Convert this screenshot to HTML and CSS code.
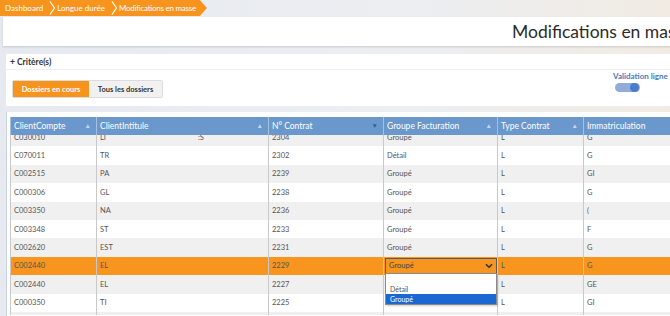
FILE: index.html
```html
<!DOCTYPE html>
<html lang="fr">
<head>
  <meta charset="UTF-8">
  <meta name="viewport" content="width=device-width, initial-scale=1.0">
  <title>Modifications en masse</title>
  <link rel="stylesheet" href="styles.css">
</head>
<body>
  <div class="page">
    <nav class="breadcrumb">
      <span class="crumb">Dashboard</span>
      <svg class="sep" width="7" height="16" viewBox="0 0 7 16"><path d="M1 1.5 L5.5 8 L1 14.5" fill="none" stroke="#fff" stroke-width="1.2"/></svg>
      <span class="crumb">Longue durée</span>
      <svg class="sep" width="7" height="16" viewBox="0 0 7 16"><path d="M1 1.5 L5.5 8 L1 14.5" fill="none" stroke="#fff" stroke-width="1.2"/></svg>
      <span class="crumb last">Modifications en masse</span>
    </nav>

    <header class="title-bar">
      <h1>Modifications en masse</h1>
    </header>

    <section class="criteria">
      <div class="criteria-head">+ Critère(s)</div>
      <div class="criteria-body">
        <div class="tabs">
          <button class="tab active">Dossiers en cours</button>
          <button class="tab">Tous les dossiers</button>
        </div>
        <div class="validation">
          <span class="validation-label">Validation ligne</span>
          <span class="toggle"><span class="knob"></span></span>
        </div>
      </div>
    </section>

    <section class="grid">
      <table class="grid-head">
        <colgroup>
          <col class="c1"><col class="c2"><col class="c3"><col class="c4"><col class="c5"><col class="c6">
        </colgroup>
        <tr>
          <th>ClientCompte <span class="sort">&#9650;</span></th>
          <th>ClientIntitule <span class="sort">&#9650;</span></th>
          <th>N° Contrat <span class="sort down">&#9660;</span></th>
          <th>Groupe Facturation <span class="sort">&#9650;</span></th>
          <th>Type Contrat <span class="sort">&#9650;</span></th>
          <th>Immatriculation <span class="sort">&#9650;</span></th>
        </tr>
      </table>
      <div class="grid-body">
        <table class="rows">
          <colgroup>
            <col class="c1"><col class="c2"><col class="c3"><col class="c4"><col class="c5"><col class="c6">
          </colgroup>
          <tr class="alt"><td>C030010</td><td>LI<span class="gap"></span>:S</td><td>2304</td><td>Groupé</td><td>L</td><td>G</td></tr>
          <tr><td>C070011</td><td>TR</td><td>2302</td><td>Détail</td><td>L</td><td>G</td></tr>
          <tr class="alt"><td>C002515</td><td>PA</td><td>2239</td><td>Groupé</td><td>L</td><td>GI</td></tr>
          <tr><td>C000306</td><td>GL</td><td>2238</td><td>Groupé</td><td>L</td><td>G</td></tr>
          <tr class="alt"><td>C003350</td><td>NA</td><td>2236</td><td>Groupé</td><td>L</td><td>(</td></tr>
          <tr><td>C003348</td><td>ST</td><td>2233</td><td>Groupé</td><td>L</td><td>F</td></tr>
          <tr class="alt"><td>C002620</td><td>EST</td><td>2231</td><td>Groupé</td><td>L</td><td>G</td></tr>
          <tr class="selected">
            <td>C002440</td><td>EL</td><td>2229</td>
            <td class="edit">
              <div class="select">
                <span>Groupé</span>
                <svg width="8" height="6" viewBox="0 0 8 6"><path d="M1 1.2 L4 4.2 L7 1.2" fill="none" stroke="#333" stroke-width="1.6"/></svg>
              </div>
              <ul class="options">
                <li></li>
                <li>Détail</li>
                <li class="hover">Groupé</li>
              </ul>
            </td>
            <td>L</td><td>G</td>
          </tr>
          <tr class="alt"><td>C002440</td><td>EL</td><td>2227</td><td></td><td>L</td><td>GE</td></tr>
          <tr><td>C000350</td><td>TI</td><td>2225</td><td></td><td>L</td><td>GI</td></tr>
          <tr class="alt"><td>C000349</td><td>TI</td><td>2224</td><td>Groupé</td><td>L</td><td>G</td></tr>
        </table>
      </div>
    </section>
  </div>
</body>
</html>
```

FILE: styles.css
```css
/* General */
body {
  margin: 0;
  overflow: hidden;
  font-family: Lato, 'Open Sans', sans-serif;
  background: linear-gradient(90deg, #e6eaf0 0%, #eceef2 60%, #f1ebe3 100%);
}

.page {
  width: 720px;
  height: 316px;
}

/* Breadcrumb */
.breadcrumb {
  display: flex;
  align-items: center;
  width: max-content;
  height: 16px;
  padding: 0 11px 0 5px;
  background-color: #f7941d;
  clip-path: polygon(0 0, calc(100% - 7px) 0, 100% 50%, calc(100% - 7px) 100%, 0 100%);
}

.crumb {
  color: #fff;
  font-size: 8px;
  white-space: nowrap;
}

.crumb.last {
  letter-spacing: -0.25px;
}

.sep {
  margin: 0 1px 0 6px;
}

/* Title */
.title-bar {
  margin: 1px 0 0 3px;
  height: 29px;
  background-color: #fff;
  box-shadow: 0 1px 2px rgba(0, 0, 0, 0.15);
  display: flex;
  align-items: center;
}

.title-bar h1 {
  margin: 0 0 0 509px;
  font-size: 17.5px;
  font-weight: 400;
  color: #2b2b2b;
  white-space: nowrap;
}

/* Criteria panel */
.criteria {
  margin: 8px 0 0 6px;
  background-color: #fff;
}

.criteria-head {
  height: 15px;
  line-height: 17px;
  padding-left: 4px;
  font-size: 8.5px;
  font-weight: 700;
  color: #333;
  border-bottom: 1px solid #eef0f3;
}

.criteria-body {
  display: flex;
  align-items: flex-start;
  height: 36px;
  padding-left: 6px;
}

.tabs {
  display: flex;
  margin-top: 10px;
  border: 1px solid #dcdcdc;
  border-radius: 2px;
}

.tab {
  height: 16px;
  padding: 0 6px;
  border: none;
  font-family: Lato, sans-serif;
  font-size: 7.5px;
  font-weight: 700;
  color: #333;
  background-color: #f1f1f1;
}

.tab.active {
  background-color: #f7941d;
  color: #fff;
  width: 76px;
}

.tab + .tab {
  width: 73px;
}

.validation {
  margin-left: 450px;
  display: flex;
  flex-direction: column;
  gap: 2px;
}

.validation-label {
  font-size: 8px;
  font-weight: 700;
  color: #4f77b9;
  white-space: nowrap;
  margin-top: 1px;
}

.toggle {
  display: flex;
  justify-content: flex-end;
  align-items: center;
  width: 23px;
  height: 9px;
  margin-left: 2px;
  padding: 0 1px;
  border-radius: 5px;
  background-color: #92acd8;
}

.knob {
  width: 9px;
  height: 9px;
  border-radius: 50%;
  background-color: #4a7ccd;
}

/* Grid */
.grid {
  margin: 6px 0 0 6px;
  padding: 5px 0 0 3px;
  background-color: #fff;
  border-left: 1px solid #c8d3e2;
  height: 200px;
}

table {
  border-collapse: collapse;
  table-layout: fixed;
  width: 673px;
}

.c1 { width: 86px; }
.c2 { width: 172px; }
.c3 { width: 115px; }
.c4 { width: 114px; }
.c5 { width: 86px; }
.c6 { width: 100px; }

.grid-head th {
  height: 18px;
  padding: 0 3px;
  background-color: #6a97cc;
  color: #fff;
  font-size: 8.5px;
  font-weight: 400;
  text-align: left;
  border-left: 1px solid #a9c0dd;
  white-space: nowrap;
  position: relative;
}

.sort {
  position: absolute;
  right: 5px;
  top: 5px;
  font-size: 6.5px;
  color: #c5d6ec;
}

.sort.down {
  color: #3d5f8c;
}

.grid-body {
  height: 180px;
  overflow: hidden;
}

.rows {
  margin-top: -7px;
}

.rows td {
  height: 18.4px;
  padding: 0 3px;
  font-size: 7.5px;
  color: #555;
  border-left: 1px solid #c9c9c9;
  white-space: nowrap;
  background-color: #fff;
}

.rows tr.alt td {
  background-color: #f0f0f0;
}

.rows tr.selected td {
  background-color: #f7951e;
}

.gap {
  display: inline-block;
  width: 92px;
}

/* Editing cell */
.rows td.edit {
  padding: 0;
  position: relative;
}

.select {
  display: flex;
  justify-content: space-between;
  align-items: center;
  height: 14px;
  margin: 0 0 0 1px;
  padding: 0 3px;
  border: 1px solid #5a5a5a;
  color: #444;
}

.options {
  position: absolute;
  left: 1px;
  right: 0;
  top: 16.5px;
  margin: 0;
  padding: 0;
  list-style: none;
  background-color: #fff;
  border: 1px solid #8a8a8a;
  box-shadow: 1px 1px 2px rgba(0, 0, 0, 0.2);
  z-index: 2;
}

.options li {
  height: 10px;
  line-height: 10px;
  padding: 0 4px;
  font-size: 7px;
  color: #555;
  overflow: hidden;
}

.options li.hover {
  background-color: #1b68d3;
  color: #fff;
}
```
